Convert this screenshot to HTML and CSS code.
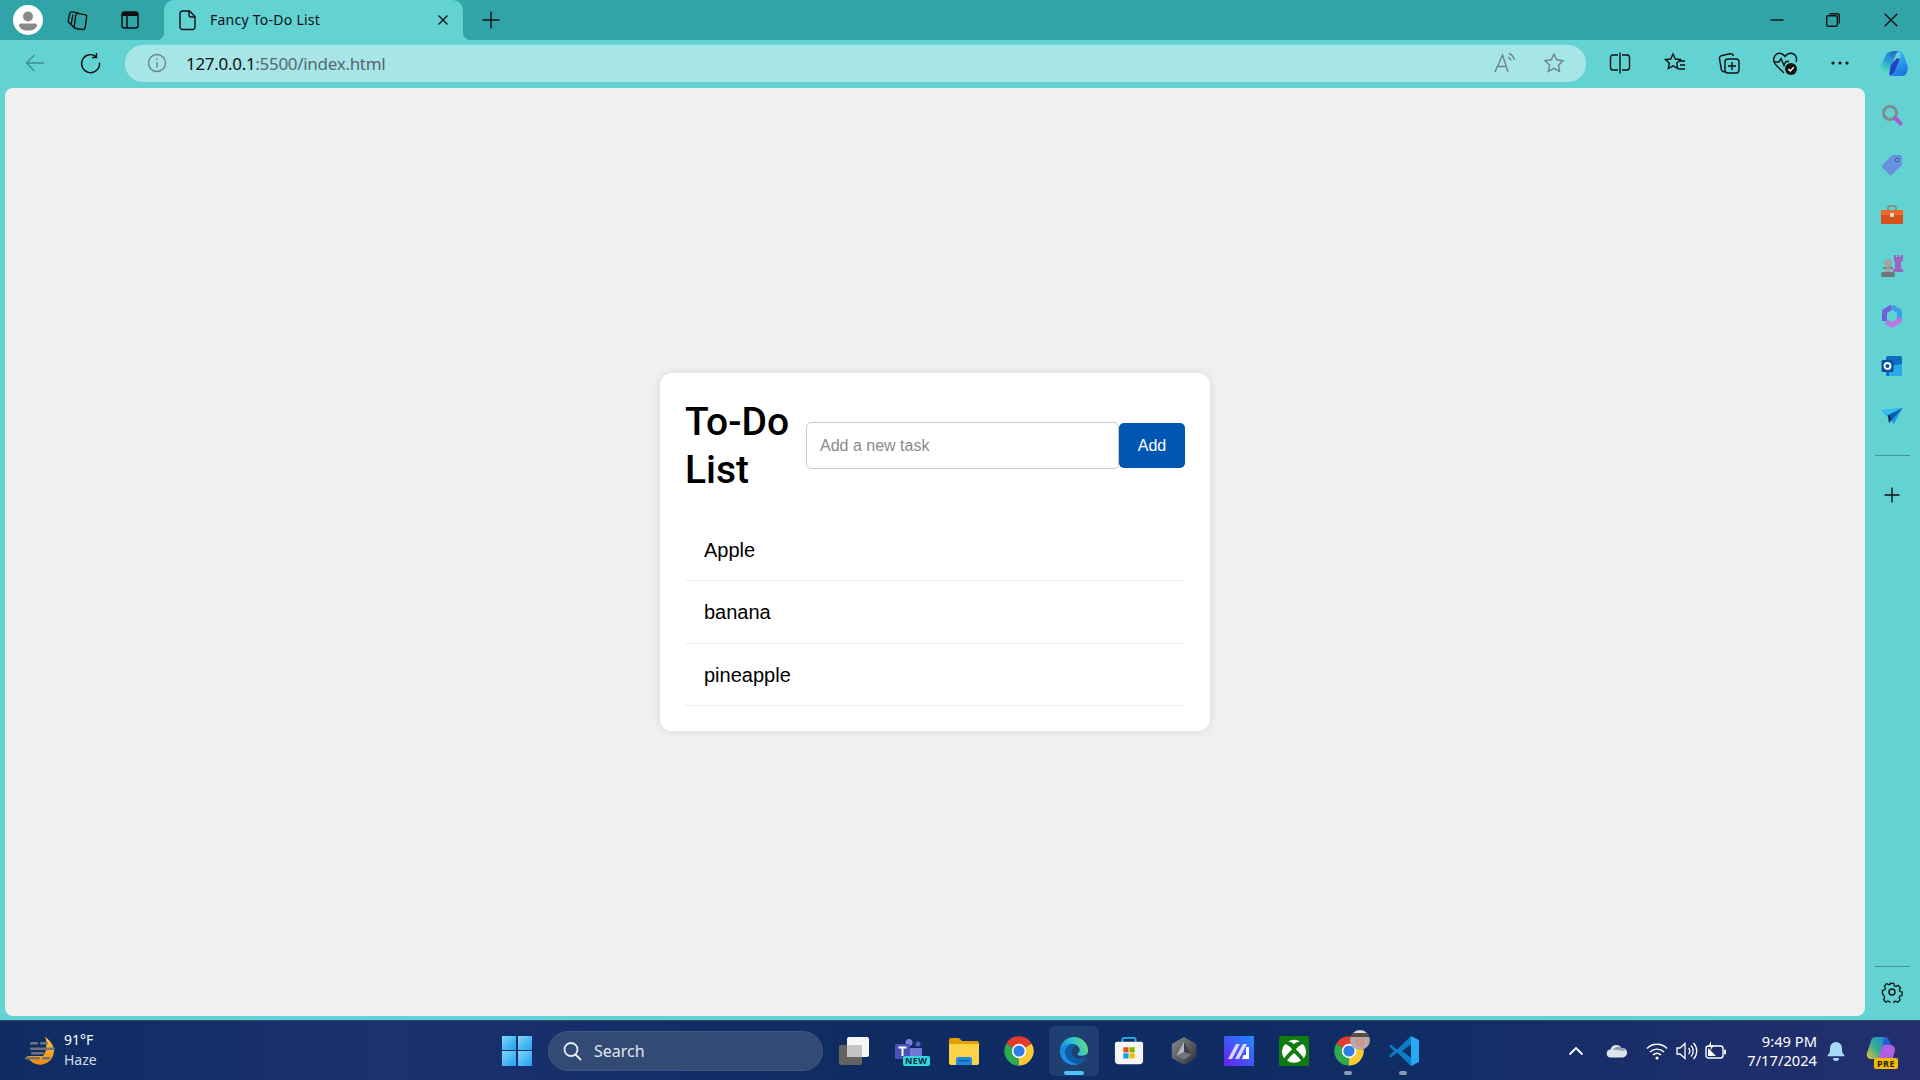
FILE: index.html
```html
<!DOCTYPE html>
<html lang="en">
<head>
  <meta charset="UTF-8">
  <title>Fancy To-Do List</title>
  <link rel="stylesheet" href="styles.css">
</head>
<body>
  <!-- Tab strip -->
  <div class="tabbar">
    <div class="avatar">
      <svg width="30" height="30" viewBox="0 0 30 30"><circle cx="15" cy="15" r="15" fill="#fff"/><circle cx="15" cy="11.5" r="5" fill="#8a8a8a"/><path d="M7.5 18.5h15a1.5 1.5 0 0 1 1.5 1.5c0 3.5-4 5.5-9 5.5s-9-2-9-5.5a1.5 1.5 0 0 1 1.5-1.5z" fill="#8a8a8a"/></svg>
    </div>
    <div class="tabbar-btn">
      <svg class="line" width="24" height="24" viewBox="0 0 24 24"><rect x="10" y="6" width="11" height="15" rx="2" transform="rotate(8 15 13)"/><path d="M9 19.5 6.5 17a2 2 0 0 1-.3-1.6L8 6.5M6 16.5 3.6 14a2 2 0 0 1-.4-1.7L4.8 5.5a2 2 0 0 1 2.3-1.6l7 1.2"/></svg>
    </div>
    <div class="tabbar-btn">
      <svg width="22" height="22" viewBox="0 0 22 22"><rect x="3" y="3" width="16" height="16" rx="2.5" fill="none" stroke="#111" stroke-width="1.5"/><path d="M3 5.5a2.5 2.5 0 0 1 2.5-2.5h11a2.5 2.5 0 0 1 2.5 2.5V7H3z" fill="#111"/><path d="M8 7v12" stroke="#111" stroke-width="1.5"/></svg>
    </div>
    <div class="tab">
      <svg class="line" width="20" height="24" viewBox="0 0 20 24"><path d="M4.5 3h7L17 8.5V19a2.5 2.5 0 0 1-2.5 2.5h-10A2.5 2.5 0 0 1 2 19V5.5A2.5 2.5 0 0 1 4.5 3zM11 3v4a2 2 0 0 0 2 2h4"/></svg>
      <span class="tab-title">Fancy To-Do List</span>
      <svg class="line tab-close" width="12" height="12" viewBox="0 0 12 12"><path d="M1.5 1.5l9 9M10.5 1.5l-9 9"/></svg>
    </div>
    <svg class="line new-tab" width="20" height="20" viewBox="0 0 20 20"><path d="M10 1.5v17M1.5 10h17"/></svg>
    <div class="window-btns">
      <svg class="line" width="14" height="14" viewBox="0 0 14 14"><path d="M0.5 7h13"/></svg>
      <svg class="line" width="14" height="14" viewBox="0 0 14 14"><rect x="0.7" y="2.7" width="10.6" height="10.6" rx="1.5"/><path d="M3.5 0.7h7.8a2 2 0 0 1 2 2v7.8"/></svg>
      <svg class="line" width="14" height="14" viewBox="0 0 14 14"><path d="M0.7 0.7l12.6 12.6M13.3 0.7L0.7 13.3"/></svg>
    </div>
  </div>

  <!-- Address bar row -->
  <div class="toolbar">
    <div class="tool-btn">
      <svg class="line dim" width="22" height="22" viewBox="0 0 22 22"><path d="M20 11H2.5M10.5 3l-8 8 8 8"/></svg>
    </div>
    <div class="tool-btn">
      <svg class="line" width="22" height="22" viewBox="0 0 22 22"><path d="M17 4.5a9 9 0 1 0 3.5 6M17.5 1v4.5H13"/></svg>
    </div>
    <div class="address">
      <svg class="line gray" width="20" height="20" viewBox="0 0 20 20"><circle cx="10" cy="10" r="8.5"/><path d="M10 9v5.5M10 5.500v1.500"/></svg>
      <span class="url"><b>127.0.0.1</b>:5500/index.html</span>
      <svg class="line gray read-aloud" width="24" height="22" viewBox="0 0 24 22"><path d="M2 20 9.5 3 15 20M4.5 14.5h8.5M15 5a6 6 0 0 1 3 3.5M16 1.5a9 9 0 0 1 5.5 6.5"/></svg>
      <svg class="line gray star" width="22" height="22" viewBox="0 0 22 22"><path d="M11 2l2.8 5.8 6.2.9-4.5 4.4 1.1 6.3L11 16.4l-5.6 3 1.1-6.3L2 8.7l6.2-.9z"/></svg>
    </div>
    <div class="tool-btn">
      <svg class="line" width="22" height="24" viewBox="0 0 22 24"><path d="M9 4H4a2.5 2.5 0 0 0-2.5 2.5v10A2.5 2.5 0 0 0 4 19h5M13 4h5a2.5 2.5 0 0 1 2.5 2.5v10A2.5 2.5 0 0 1 18 19h-5M11 1.5v21"/></svg>
    </div>
    <div class="tool-btn">
      <svg class="line" width="24" height="24" viewBox="0 0 24 24"><path d="M10 3l2.3 5 5.2.6-3.8 3.6 1 5.3-4.7-2.7-4.700 2.700 1-5.300L2.500 8.600 7.700 8zM16 10h6M17 14h5M15 18h7"/></svg>
    </div>
    <div class="tool-btn">
      <svg class="line" width="24" height="24" viewBox="0 0 24 24"><path d="M7 21l-2-.5a2 2 0 0 1-1.500-1.500L1.500 8A3 3 0 0 1 4 4.500l8-1.700A3 3 0 0 1 15.500 5"/><rect x="7" y="8" width="14" height="14" rx="3"/><path d="M14 11v8M10 15h8"/></svg>
    </div>
    <div class="tool-btn">
      <svg width="26" height="26" viewBox="0 0 26 26"><path d="M3 14C-.5 8 4 2 9 3.500c1.500.5 3 1.500 4 3 1-1.500 2.500-2.500 4-3 5-1.500 9 3.500 7 8.500M3 14l9 9M1.500 12H7l2-3.500 3 7 2-4h3" fill="none" stroke="#111" stroke-width="1.4"/><circle cx="19" cy="19" r="6" fill="#111"/><path d="M16.300 19l2 2 3.500-3.800" fill="none" stroke="#fff" stroke-width="1.4"/></svg>
    </div>
    <div class="tool-btn">
      <svg width="20" height="6" viewBox="0 0 20 6"><circle cx="3" cy="3" r="1.6" fill="#111"/><circle cx="10" cy="3" r="1.6" fill="#111"/><circle cx="17" cy="3" r="1.6" fill="#111"/></svg>
    </div>
    <div class="tool-btn tool-copilot">
      <svg width="28" height="27" viewBox="0 0 28 27">
        <defs>
          <linearGradient id="cop1" x1="0.7" y1="0" x2="0.2" y2="1"><stop offset="0" stop-color="#1f6fc8"/><stop offset="0.5" stop-color="#2aa0d8"/><stop offset="1" stop-color="#50e0b0"/></linearGradient>
          <linearGradient id="cop2" x1="0.3" y1="0" x2="0.7" y2="1"><stop offset="0" stop-color="#2fc8f5"/><stop offset="1" stop-color="#1f6fe0"/></linearGradient>
        </defs>
        <path d="M10 2C11 1 13 1 16 1h3c-2 1-3 3-4 5L11 19c-1 2-3 3-6 3H4C1 22-.5 19 .5 16L6 5c1-2 2-3 4-3z" fill="url(#cop1)"/>
        <path d="M19 1c2 0 4 2 5 5l3.500 10c1 4-1 10-5 10H12c-1 0-2 0-3-1 3 0 5-2 6-4l5-11c1-3 0-7-1-9z" fill="url(#cop2)"/>
        <path d="M17 8l3 1-5 12c-1 2-3 4-6 4l2-10z" fill="#2342c4"/>
      </svg>
    </div>
  </div>

  <div class="middle">
    <!-- The page itself -->
    <main class="page">
      <div class="container">
        <div class="todo-header">
          <h1>To-Do List</h1>
          <input class="task-input" type="text" placeholder="Add a new task">
          <button class="add-btn">Add</button>
        </div>
        <ul class="task-list">
          <li>Apple</li>
          <li>banana</li>
          <li>pineapple</li>
        </ul>
      </div>
    </main>

    <!-- Edge sidebar -->
    <aside class="sidebar">
      <div class="side-btn">
        <svg width="22" height="22" viewBox="0 0 22 22"><circle cx="9" cy="9" r="6.5" fill="none" stroke="#828c8e" stroke-width="3"/><path d="M14 14l5.5 5.5" stroke="#a45cc8" stroke-width="4" stroke-linecap="round"/></svg>
      </div>
      <div class="side-btn">
        <svg width="22" height="22" viewBox="0 0 22 22"><path d="M12 1h7a2 2 0 0 1 2 2v7a2 2 0 0 1-.6 1.4L11 20.5a2 2 0 0 1-2.8 0L1.500 13.800a2 2 0 0 1 0-2.800l9-9.400A2 2 0 0 1 12 1z" fill="#6a8fe0"/><circle cx="16" cy="6" r="2" fill="#1d4f9a"/><circle cx="16" cy="6" r="1" fill="#8fd0f0"/></svg>
      </div>
      <div class="side-btn">
        <svg width="24" height="20" viewBox="0 0 24 20"><path d="M8 5V2.500A1.500 1.500 0 0 1 9.500 1h5A1.500 1.500 0 0 1 16 2.500V5" fill="none" stroke="#8a8080" stroke-width="1.6"/><rect x="1" y="5" width="22" height="14" rx="1.5" fill="#d8531c"/><rect x="1" y="5" width="22" height="5" rx="1" fill="#ee6a2c"/><rect x="10" y="8" width="4" height="4" rx="1" fill="#e6d8d0"/></svg>
      </div>
      <div class="side-btn">
        <svg width="24" height="24" viewBox="0 0 24 24"><circle cx="8" cy="9" r="4" fill="#a0a4a4"/><path d="M3 13h10v2H3z" fill="#7e8484"/><path d="M6 14h4l1 4H5z" fill="#a0a4a4"/><rect x="1" y="18" width="14" height="5" rx="2.5" fill="#6e7474"/><path d="M14 1h2v2h1.500V1h2v2H21V1h2v6l-2 1v7h2v3H13v-3h2V8l-1-1z" fill="#9c62c4"/></svg>
      </div>
      <div class="side-btn">
        <svg width="22" height="24" viewBox="0 0 22 24" fill="none" stroke-width="5" stroke-linejoin="round">
          <path d="M3.5 17V7.5L11 3" stroke="#6a62d8"/>
          <path d="M11 3l7.5 4.5V14" stroke="#3aa0e8"/>
          <path d="M18.5 14v2.5L11 21l-6-3" stroke="#b878e0"/>
        </svg>
      </div>
      <div class="side-btn">
        <svg width="22" height="22" viewBox="0 0 22 22"><rect x="5" y="1" width="16" height="20" rx="1.5" fill="#0f6cbd"/><path d="M8 11l13-2v12H8z" fill="#28a8ea"/><rect x="0.5" y="5" width="12" height="12" rx="1.5" fill="#0a4f9e"/><circle cx="6.5" cy="11" r="3" fill="none" stroke="#fff" stroke-width="1.8"/></svg>
      </div>
      <div class="side-btn">
        <svg width="22" height="18" viewBox="0 0 22 18"><path d="M0.5 3 21.5 1 13 17z" fill="#1e9fe8"/><path d="M0.5 3 7 8 21.5 1z" fill="#34c0f4"/><path d="M7 8l1 8 4-4 9.5-11z" fill="#0f5fae"/><path d="M7 8l1 8 2.5-5.5z" fill="#0c2f5e"/></svg>
      </div>
      <div class="side-divider"></div>
      <div class="side-btn side-plus">
        <svg class="line" width="16" height="16" viewBox="0 0 16 16"><path d="M8 0.5v15M0.5 8h15"/></svg>
      </div>
      <div class="side-bottom">
        <div class="side-divider side-divider-low"></div>
        <div class="side-btn">
          <svg class="line" width="22" height="22" viewBox="0 0 22 22"><path d="M9 1.5h4l.6 2.600 1.900.8 2.300-1.400 2.700 2.900-1.400 2.200.8 1.900 2.500.6-.3 3.900-2.400.6-.8 1.900 1.200 2.200-2.800 2.700-2.200-1.300-1.900.8-.6 2.400H9l-.6-2.500-1.900-.8-2.200 1.300-2.700-2.800 1.300-2.200-.8-1.900L.4 13V9.100l2.500-.6.8-1.900L2.400 4.400l2.800-2.800 2.200 1.400 1.900-.8z" transform="translate(1.1 1.1) scale(.9)"/><circle cx="11" cy="11" r="3"/></svg>
        </div>
      </div>
    </aside>
  </div>

  <!-- Windows taskbar -->
  <footer class="taskbar">
    <div class="weather">
      <svg width="30" height="28" viewBox="0 0 30 28">
        <defs><linearGradient id="sun" x1="0" y1="0" x2="0" y2="1"><stop offset="0" stop-color="#fcc83c"/><stop offset="1" stop-color="#ee8a14"/></linearGradient></defs>
        <path d="M20 0c6 4 9 9 9 14A14 14 0 0 1 2 19h16c4-5 5-13 2-19z" fill="url(#sun)"/>
        <path d="M20 0c4 3 7 7 8 11H21c1-4 1-8-1-11z" fill="#f5b52c"/>
        <g fill="#6f747c"><rect x="5" y="5" width="8" height="2.5" rx="1.2"/><rect x="15" y="5" width="8" height="2.5" rx="1.2"/><rect x="5" y="10.5" width="25" height="2.5" rx="1.2"/><rect x="6" y="15" width="13" height="2.5" rx="1.2"/><rect x="0" y="20" width="15" height="2.5" rx="1.2"/><rect x="17" y="20" width="8" height="2.5" rx="1.2"/></g>
      </svg>
      <div class="weather-text">
        <span>91°F</span>
        <span class="haze">Haze</span>
      </div>
    </div>
    <div class="start">
      <i></i><i></i><i></i><i></i>
    </div>
    <div class="search">
      <svg width="22" height="22" viewBox="0 0 22 22"><circle cx="10" cy="9.5" r="6.5" fill="none" stroke="#e8edf4" stroke-width="1.8"/><path d="M14.5 14.5l5 5" stroke="#e8edf4" stroke-width="1.8" stroke-linecap="round"/></svg>
      <span>Search</span>
    </div>
    <div class="apps">
      <div class="app">
        <svg width="30" height="28" viewBox="0 0 30 28"><rect x="0" y="8" width="23" height="20" rx="2" fill="#636363"/><rect x="8" y="0" width="22" height="20" rx="2" fill="#f6f6f6"/><rect x="8" y="8" width="15" height="12" fill="#c4c4c4"/></svg>
      </div>
      <div class="app">
        <svg width="28" height="24" viewBox="0 0 28 24"><circle cx="14" cy="3.5" r="3.5" fill="#7a7fdc"/><circle cx="23" cy="5" r="2.5" fill="#5a5fc0"/><path d="M12 9h15v9c0 3-3 5-7 5s-7-2-8-5z" fill="#7378d8"/><rect x="0" y="5" width="15" height="15" rx="1.5" fill="#4b50b8"/><path d="M3.5 8.5h8M7.5 8.5v8.5" stroke="#fff" stroke-width="2"/></svg>
        <span class="new-badge">NEW</span>
      </div>
      <div class="app">
        <svg width="32" height="32" viewBox="0 0 32 32"><path d="M1 5a2 2 0 0 1 2-2h8l3 3h15a2 2 0 0 1 2 2v3H1z" fill="#e0a000"/><path d="M1 9h30v19a2 2 0 0 1-2 2H3a2 2 0 0 1-2-2z" fill="#fbd346"/><path d="M8 30v-6a2 2 0 0 1 2-2h12a2 2 0 0 1 2 2v6z" fill="#1f88d8"/><rect x="11" y="25" width="10" height="1.5" fill="#0c5a9e"/></svg>
      </div>
      <div class="app">
        <svg width="32" height="32" viewBox="0 0 24 24"><use href="#chrome-icon"/></svg>
      </div>
      <div class="app-active-wrap">
        <div class="app app-active">
          <svg width="30" height="30" viewBox="0 0 32 32">
            <defs>
              <linearGradient id="edgeA" x1="0" y1="0.6" x2="1" y2="0.3"><stop offset="0" stop-color="#1a8ae0"/><stop offset="0.5" stop-color="#2cc0d8"/><stop offset="1" stop-color="#6fe070"/></linearGradient>
            </defs>
            <path d="M1 16A15 15 0 0 1 31 16C31 20 27 21 23 21 20 21 19 20 20 19 22 17 23 15 21 12 19 9 15 8 12 9 6 10 2 13 1 16z" fill="url(#edgeA)"/>
            <path d="M1 16C2 12 7 9 12 9 8 11 6 15 7 19 8 25 14 30 22 29.5A15 15 0 0 1 16 31C7 31 1 24 1 16z" fill="#1c8ce0"/>
            <path d="M12 9C8 11 6 15 7 19 8 25 14 30 22 29.5 25.5 28.5 28 26 29 23 24 25 18 24 15 21 12 17 14 11 19 10 17 9 14 8.5 12 9z" fill="#0d5ca8"/>
          </svg>
          <span class="dot dot-active"></span>
        </div>
      </div>
      <div class="app">
        <svg width="30" height="30" viewBox="0 0 32 32"><path d="M9 7V4a2 2 0 0 1 2-2h10a2 2 0 0 1 2 2v3" fill="none" stroke="#2ab0e8" stroke-width="2"/><path d="M3 6h26a2 2 0 0 1 2 2v18a4 4 0 0 1-4 4H5a4 4 0 0 1-4-4V8a2 2 0 0 1 2-2z" fill="#f4f4f4"/><rect x="10" y="12" width="5.5" height="5.5" fill="#e8501c"/><rect x="16.5" y="12" width="5.5" height="5.5" fill="#7cb800"/><rect x="10" y="18.5" width="5.5" height="5.5" fill="#00a4ef"/><rect x="16.5" y="18.5" width="5.5" height="5.5" fill="#ffb900"/></svg>
      </div>
      <div class="app">
        <svg width="28" height="30" viewBox="0 0 28 32">
          <defs><linearGradient id="hexG" x1="0" y1="0" x2="1" y2="1"><stop offset="0" stop-color="#8a8e92"/><stop offset="1" stop-color="#2c2e32"/></linearGradient></defs>
          <path d="M14 1l13 7.5v15L14 31 1 23.5v-15z" fill="url(#hexG)"/>
          <path d="M14 6l8 14-8-3-8 4z" fill="#b4b8bc"/>
          <path d="M14 6l8 14-8-3z" fill="#3c3f44"/>
          <path d="M6 21l8-4 8 3-8 5z" fill="#72767c"/>
        </svg>
      </div>
      <div class="app">
        <svg width="32" height="32" viewBox="0 0 32 32">
          <defs><linearGradient id="aiG" x1="0" y1="1" x2="1" y2="0"><stop offset="0" stop-color="#6a1ef0"/><stop offset="1" stop-color="#1e8cff"/></linearGradient></defs>
          <rect x="1" y="1" width="30" height="30" fill="url(#aiG)"/>
          <path d="M5 24 13 9h4L9 24zM12 24 20 9h4L16 24z" fill="#d8d4fa"/><path d="M23 12h3v12h-7l1.500-4H23z" fill="#fff"/>
        </svg>
      </div>
      <div class="app">
        <svg width="30" height="30" viewBox="0 0 32 32"><rect x="0" y="0" width="32" height="32" rx="2" fill="#107c10"/><g fill="#fff"><path d="M9 6.5a12 12 0 0 1 14 0c-3-1-5 .5-7 2-2-1.500-4-3-7-2z"/><path d="M6.5 8.5c3 1 6 3.500 7.500 5.500-3 3-7 7-8.500 10a12 12 0 0 1 1-15.500z"/><path d="M25.5 8.5c-3 1-6 3.500-7.500 5.500 3 3 7 7 8.500 10a12 12 0 0 0-1-15.500z"/><path d="M16 18c3 3 6 6 7.500 8a12 12 0 0 1-15 0c1.500-2 4.500-5 7.500-8z"/></g></svg>
      </div>
      <div class="app">
        <svg width="32" height="32" viewBox="0 0 24 24">
          <defs>
            <g id="chrome-icon">
              <path d="M12 12 2.47 6.5A11 11 0 0 1 21.53 6.5z" fill="#e33b2e"/>
              <path d="M12 12 21.53 6.5A11 11 0 0 1 12 23z" fill="#fcc934"/>
              <path d="M12 12 12 23A11 11 0 0 1 2.47 6.5z" fill="#2da94f"/>
              <circle cx="12" cy="12" r="5.4" fill="#fff"/>
              <circle cx="12" cy="12" r="4.2" fill="#2f7de8"/>
            </g>
          </defs>
          <use href="#chrome-icon"/>
        </svg>
        <span class="profile-pic"></span>
        <span class="dot"></span>
      </div>
      <div class="app">
        <svg width="32" height="32" viewBox="0 0 32 32"><path d="M23 1l8 4v22l-8 4z" fill="#28a8f0"/><path d="M23 1 9 14.5 3 9.5 1 11 6 16 1 21l2 1.5 6-5L23 31v-8.500L14 16l9-6.500z" fill="#0f7cc8"/></svg>
        <span class="dot"></span>
      </div>
    </div>
    <div class="tray">
      <svg class="tray-chevron" width="16" height="10" viewBox="0 0 16 10"><path d="M1.5 8.5 8 2l6.5 6.5" fill="none" stroke="#fff" stroke-width="1.8"/></svg>
      <svg class="tray-cloud" width="22" height="14" viewBox="0 0 22 14"><path d="M5 13.5a4 4 0 0 1-.5-8A6 6 0 0 1 15.5 4 4.800 4.800 0 0 1 17 13.500z" fill="#dfe4ea"/><path d="M7 5.5A6 6 0 0 1 15.5 4a5 5 0 0 1 4 3z" fill="#8f9bb0"/></svg>
      <svg class="tray-wifi" width="22" height="18" viewBox="0 0 22 18"><path d="M1 6.5a14 14 0 0 1 20 0M4 10a10 10 0 0 1 14 0M7 13a5.5 5.5 0 0 1 8 0" fill="none" stroke="#fff" stroke-width="1.4"/><circle cx="11" cy="16" r="1.5" fill="#fff"/></svg>
      <svg class="tray-sound" width="22" height="20" viewBox="0 0 22 20"><path d="M1 7v6h3l5 4.5v-15L4 7zM12.5 7a4 4 0 0 1 0 6M15 4.500a8 8 0 0 1 0 11M17.500 2a11.500 11.500 0 0 1 0 16" fill="none" stroke="#fff" stroke-width="1.3"/></svg>
      <svg class="tray-battery" width="22" height="20" viewBox="0 0 22 20"><rect x="1" y="5" width="17" height="12" rx="2.5" fill="none" stroke="#fff" stroke-width="1.4"/><path d="M3 15V7l8 8z" fill="#fff"/><rect x="19" y="8.5" width="2" height="5" rx="1" fill="#fff"/><path d="M6 0 3 6h3l-1 4 4-6H6z" fill="#fff"/></svg>
      <div class="clock">
        <span>9:49 PM</span>
        <span>7/17/2024</span>
      </div>
      <svg class="tray-bell" width="18" height="20" viewBox="0 0 18 20"><path d="M9 1a6 6 0 0 1 6 6v4l2.500 3.500a.5.5 0 0 1-.4.8H.9a.5.5 0 0 1-.4-.8L3 11V7a6 6 0 0 1 6-6z" fill="#a4dcf8"/><path d="M6 17a3 3 0 0 0 6 0z" fill="#a4dcf8"/></svg>
      <div class="copilot-pre">
        <svg width="30" height="28" viewBox="0 0 30 28">
          <defs><linearGradient id="preG" x1="0" y1="1" x2="1" y2="0"><stop offset="0" stop-color="#f0c030"/><stop offset="0.5" stop-color="#30b090"/><stop offset="1" stop-color="#2a80e0"/></linearGradient></defs>
          <path d="M9 1h10l-6 22H5c-3 0-5-3-4-6L5 5a5 5 0 0 1 4-4z" fill="url(#preG)"/>
          <path d="M17 9h8c3 0 4 3 4 5l-2 8c-1 2-2 3-4 3H11z" fill="#b060e0"/>
          <path d="M19 1c2 0 3 1 4 3l2 5h-8z" fill="#2560d8"/>
        </svg>
        <span class="pre-badge">PRE</span>
      </div>
    </div>
  </footer>
</body>
</html>
```

FILE: styles.css
```css
* {
  box-sizing: border-box;
}
body {
  margin: 0;
  width: 1920px;
  height: 1080px;
  overflow: hidden;
  display: flex;
  flex-direction: column;
  background-color: #62d2d2;
  font-family: 'Noto Sans', sans-serif;
  color: #111;
}
.line {
  fill: none;
  stroke: #111;
  stroke-width: 1.4;
}
.line.dim {
  stroke: #3f8f94;
}
.line.gray {
  stroke: #6f8487;
}

/* tab strip */
.tabbar {
  height: 40px;
  flex-shrink: 0;
  display: flex;
  align-items: center;
  background-color: #31a4a8;
  padding-left: 13px;
}
.avatar {
  width: 30px;
  height: 30px;
}
.tabbar-btn {
  width: 52px;
  display: flex;
  justify-content: center;
  margin-left: 8px;
}
.tabbar-btn + .tabbar-btn {
  margin-left: 1px;
}
.tab {
  width: 299px;
  height: 40px;
  margin-left: 8px;
  padding: 0 14px 1px 14px;
  display: flex;
  align-items: center;
  background-color: #62d2d2;
  border-radius: 10px 10px 0 0;
  position: relative;
}
.tab::before,
.tab::after {
  content: "";
  position: absolute;
  bottom: 0;
  width: 8px;
  height: 8px;
}
.tab::before {
  left: -8px;
  background: radial-gradient(circle at 0 0, #31a4a8 8px, #62d2d2 8.5px);
}
.tab::after {
  right: -8px;
  background: radial-gradient(circle at 100% 0, #31a4a8 8px, #62d2d2 8.5px);
}
.tab-title {
  margin-left: 12px;
  font-size: 14px;
  letter-spacing: 0.25px;
  flex: 1;
}
.new-tab {
  margin-left: 18px;
}
.window-btns {
  margin-left: auto;
  display: flex;
  gap: 42px;
  padding-right: 22px;
}
.window-btns svg + svg + svg {
  margin-left: 2px;
}

/* address bar row */
.toolbar {
  height: 48px;
  flex-shrink: 0;
  display: flex;
  align-items: center;
  padding-left: 7px;
  padding-bottom: 2px;
}
.tool-btn {
  width: 55px;
  height: 36px;
  flex-shrink: 0;
  display: flex;
  align-items: center;
  justify-content: center;
}
.tool-copilot {
  width: 53px;
}
.address {
  flex: 1;
  height: 37px;
  margin-left: 8px;
  margin-right: 6px;
  padding: 0 21px 0 22px;
  display: flex;
  align-items: center;
  background-color: #a6e6e6;
  border-radius: 18px;
}
.url {
  margin-left: 19px;
  font-size: 17px;
  letter-spacing: -0.3px;
  color: #55696c;
  flex: 1;
}
.url b {
  font-weight: 400;
  color: #111;
}
.star {
  margin-left: 26px;
}

/* page area */
.middle {
  flex: 1;
  display: flex;
  min-height: 0;
}
.page {
  flex: 1;
  margin: 0 0 4px 5px;
  display: flex;
  align-items: center;
  justify-content: center;
  background-color: #f0f0f0;
  border-radius: 8px;
}
.container {
  width: 550px;
  padding: 25px;
  background-color: #fff;
  border-radius: 12px;
  box-shadow: 0 0 10px rgba(0, 0, 0, 0.1);
  font-family: 'Liberation Sans', Arial, sans-serif;
}
.todo-header {
  display: flex;
  align-items: center;
  margin-bottom: 25px;
}
h1 {
  width: 121px;
  margin: 0;
  font-size: 39px;
  font-family: Roboto, 'Liberation Sans', sans-serif;
  font-weight: 500;
  line-height: 48px;
  color: #000;
}
.task-input {
  flex: 1;
  min-width: 0;
  height: 47px;
  padding: 0 13px;
  border: 1px solid #ccc;
  border-radius: 5px;
  font-family: 'Liberation Sans', Arial, sans-serif;
  font-size: 16px;
  outline: none;
}
.task-input::placeholder {
  color: #8a8a8a;
}
.add-btn {
  width: 66px;
  height: 45px;
  border: none;
  border-radius: 5px;
  background-color: #0056b3;
  color: #fff;
  font-family: 'Liberation Sans', Arial, sans-serif;
  font-size: 16px;
}
.task-list {
  list-style: none;
  margin: 0;
  padding: 0;
}
.task-list li {
  padding: 20px 19px 18px 19px;
  border-bottom: 1px solid #eee;
  font-size: 20px;
  line-height: 23.5px;
  color: #000;
}

/* edge sidebar */
.sidebar {
  width: 55px;
  flex-shrink: 0;
  display: flex;
  flex-direction: column;
  align-items: center;
  padding-top: 2px;
  padding-right: 1px;
}
.side-btn {
  width: 50px;
  height: 50.2px;
  flex-shrink: 0;
  display: flex;
  align-items: center;
  justify-content: center;
}
.side-divider {
  width: 35px;
  height: 1px;
  margin-top: 14px;
  background-color: #4f8f94;
  flex-shrink: 0;
}
.side-divider-low {
  margin-top: 0;
}
.side-plus {
  margin-top: 14px;
}
.side-bottom {
  margin-top: auto;
  margin-bottom: 3px;
  display: flex;
  flex-direction: column;
  align-items: center;
}

/* taskbar */
.taskbar {
  height: 60px;
  flex-shrink: 0;
  display: flex;
  align-items: center;
  background: linear-gradient(90deg, #0e2c62 0%, #1b3170 20%, #0e2c62 45%, #0f2d64 70%, #232f6e 100%);
  border-top: 1px solid #2a4a6a;
  color: #fff;
  padding-left: 25px;
}
.weather {
  width: 477px;
  flex-shrink: 0;
  display: flex;
  align-items: center;
  gap: 9px;
}
.weather-text {
  display: flex;
  flex-direction: column;
  padding-bottom: 2px;
  font-size: 14px;
  line-height: 20px;
  color: #fff;
}
.haze {
  color: #d4dce8;
}
.start {
  width: 30px;
  height: 30px;
  display: grid;
  grid-template-columns: 1fr 1fr;
  gap: 1.5px;
}
.start i {
  display: block;
  background: linear-gradient(135deg, #7fd8f8, #1ea0f0);
}
.search {
  width: 275px;
  height: 40px;
  margin-left: 16px;
  padding-left: 12px;
  display: flex;
  align-items: center;
  gap: 11px;
  background-color: #324a74;
  border: 1px solid #3e5680;
  border-radius: 20px;
  font-size: 16px;
  color: #e0e6ee;
}
.apps {
  display: flex;
  margin-left: 3px;
}
.app {
  width: 55px;
  height: 50px;
  display: flex;
  align-items: center;
  justify-content: center;
  position: relative;
}
.app-active-wrap {
  width: 55px;
  display: flex;
  justify-content: center;
}
.app-active {
  width: 50px;
  background-color: #1f3f70;
  border-radius: 6px;
}
.dot {
  position: absolute;
  left: 23px;
  bottom: 1px;
  width: 8px;
  height: 4px;
  border-radius: 2px;
  background-color: #8a9ab0;
}
.dot-active {
  left: 15px;
  width: 20px;
  background-color: #4fc3f7;
}
.new-badge {
  position: absolute;
  left: 22px;
  bottom: 10px;
  padding: 0 2px;
  background-color: #2ed9d9;
  border-radius: 2px;
  color: #0b1f3f;
  font-size: 9px;
  font-weight: 700;
  line-height: 10px;
  letter-spacing: 0.5px;
}
.profile-pic {
  position: absolute;
  left: 29px;
  top: 4px;
  width: 20px;
  height: 20px;
  border-radius: 50%;
  background: radial-gradient(circle at 50% 60%, #c89888 0 4px, transparent 5px), linear-gradient(#d8d8d8 0 15%, #5a4a4a 15% 35%, #b8a8a8 35%);
}
.tray {
  flex: 1;
  display: flex;
  align-items: center;
  position: relative;
  height: 100%;
}
.tray svg {
  flex-shrink: 0;
}
.tray-chevron {
  margin-left: 137px;
}
.tray-cloud {
  margin-left: 22px;
}
.tray-wifi {
  margin-left: 18px;
}
.tray-sound {
  margin-left: 8px;
}
.tray-battery {
  margin-left: 7px;
}
.clock {
  width: 84px;
  margin-left: 6px;
  display: flex;
  flex-direction: column;
  align-items: flex-end;
  font-size: 14.7px;
  line-height: 19px;
}
.tray-bell {
  margin-left: 10px;
}
.copilot-pre {
  margin-left: 21px;
  position: relative;
  height: 30px;
}
.pre-badge {
  position: absolute;
  right: -2px;
  bottom: -3px;
  padding: 0 3px;
  background-color: #f5b800;
  border-radius: 2px;
  color: #222;
  font-size: 9px;
  font-weight: 700;
  line-height: 11px;
  letter-spacing: 0.5px;
}
```
